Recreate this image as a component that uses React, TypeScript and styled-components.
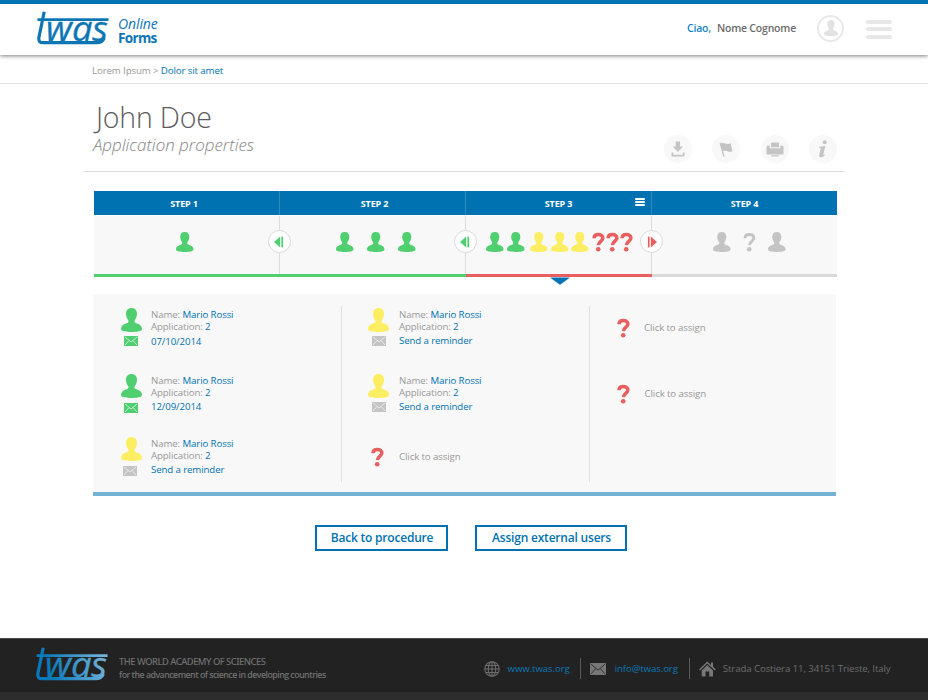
import React from "react";
import styled, { createGlobalStyle } from "styled-components";

const BLUE = "#0072b1";
const GREEN = "#50cf70";
const YELLOW = "#fbee62";
const RED = "#e85f5f";
const GREY = "#c4c4c4";

const GlobalStyle = createGlobalStyle`
  * { box-sizing: border-box; }
  body { margin: 0; background: #fff; font-family: "Open Sans", sans-serif; color: #999; }
  svg { display: block; flex: none; overflow: visible; }
  h1, h2, p { margin: 0; font-weight: 400; }
  button { font-family: inherit; padding: 0; }
`;

const Page = styled.div`
  width: 928px;
  height: 700px;
  display: flex;
  flex-direction: column;
  overflow: hidden;
`;

const Header = styled.header`
  height: 55px;
  flex: none;
  border-top: 4px solid ${BLUE};
  display: flex;
  align-items: flex-start;
  padding: 7px 36px 0 36px;
  box-shadow: 0 1px 4px rgba(0, 0, 0, 0.5);
`;

const Brand = styled.div`
  margin: 6px 0 0 8px;
  color: #0c76b4;
  font-size: 14px;
  line-height: 14px;
  flex: 1;
`;

const BrandTop = styled.div`
  font-style: italic;
  font-weight: 500;
  letter-spacing: -0.1px;
`;

const BrandBottom = styled.div`
  font-size: 13.6px;
  font-weight: 700;
  letter-spacing: -0.7px;
`;

const Greeting = styled.div`
  display: flex;
  gap: 6px;
  margin: 10px 21px 0 0;
  font-size: 10.5px;
  line-height: 14px;
  font-weight: 600;
  letter-spacing: -0.2px;
  color: #6b6b6b;
`;

const Hello = styled.span`
  color: #1583c4;
`;

const Avatar = styled.div`
  width: 27px;
  height: 27px;
  margin: 4px 22px 0 0;
  border: 2px solid #e8e8e8;
  border-radius: 50%;
  display: flex;
  justify-content: center;
  padding-top: 3px;
`;

const MenuLines = styled.div<{ $w: number; $h: number; $gap: number; $color: string }>`
  width: ${(p) => p.$w}px;
  display: flex;
  flex-direction: column;
  gap: ${(p) => p.$gap}px;
  & > i {
    height: ${(p) => p.$h}px;
    border-radius: ${(p) => p.$h / 2}px;
    background: ${(p) => p.$color};
  }
`;

const HeaderMenu = styled.div`
  padding-top: 8.5px;
`;

const Breadcrumb = styled.nav`
  height: 29px;
  flex: none;
  padding: 9px 0 0 92px;
  border-bottom: 1px solid #e1e1e1;
  font-size: 9.7px;
  letter-spacing: -0.12px;
  line-height: 14px;
  white-space: pre;
`;

const Accent = styled.span`
  color: ${BLUE};
  font-weight: 500;
`;

const TitleBar = styled.section`
  height: 88px;
  flex: none;
  margin: 0 84px 0 84px;
  padding: 13px 7px 0 9px;
  border-bottom: 1px solid #dcdcdc;
  display: flex;
  justify-content: space-between;
`;

const Title = styled.h1`
  padding-left: 3px;
  font-size: 28.5px;
  letter-spacing: -0.2px;
  line-height: 40px;
  font-weight: 300;
  color: #5c5c5c;
`;

const Subtitle = styled.h2`
  font-size: 17px;
  line-height: 24px;
  margin-top: -4px;
  letter-spacing: -0.03px;
  font-style: italic;
  font-weight: 300;
  color: #858585;
`;

const Actions = styled.div`
  display: flex;
  gap: 20.3px;
  padding-top: 38px;
`;

const Action = styled.button`
  width: 28px;
  height: 28px;
  border: 0;
  border-radius: 50%;
  background: #f8f8f8;
  display: grid;
  place-items: center;
`;

const Steps = styled.section`
  height: 86px;
  flex: none;
  margin: 19px 91px 0 94px;
  display: grid;
  grid-template-columns: 186px 186px 186px 185px;
`;

const Step = styled.div<{ $line: string }>`
  position: relative;
  display: flex;
  flex-direction: column;
  border-bottom: 3px solid ${(p) => p.$line};
`;

const StepHead = styled.div<{ $divided: boolean; $indent: number }>`
  height: 24px;
  margin-bottom: 1px;
  text-indent: ${(p) => p.$indent}px;
  background: ${BLUE};
  border-right: ${(p) => (p.$divided ? "1px solid #2f8cc0" : "0")};
  color: #fff;
  font-size: 9px;
  letter-spacing: -0.15px;
  line-height: 25px;
  font-weight: 700;
  text-align: center;
`;

const StepBody = styled.div<{ $divided: boolean; $gap: number; $left: number }>`
  flex: 1;
  display: flex;
  gap: ${(p) => p.$gap}px;
  padding: 15.5px 0 0 ${(p) => p.$left}px;
  background: #f8f8f8;
  border-right: ${(p) => (p.$divided ? "1px solid #dcdcdc" : "0")};
`;

const Slot = styled.div<{ $before: number; $w: number }>`
  width: ${(p) => p.$w}px;
  margin-left: ${(p) => p.$before}px;
`;

const StepMenu = styled.div`
  position: absolute;
  right: 7px;
  top: 7px;
`;

const Pointer = styled.div`
  position: absolute;
  top: 86px;
  left: 84px;
`;

const Handle = styled.div`
  position: absolute;
  right: -11px;
  top: 39px;
  width: 23px;
  height: 23px;
  z-index: 1;
  border: 1px solid #dadada;
  border-radius: 50%;
  background: #fff;
  display: grid;
  place-items: center;
`;

const Panel = styled.section`
  height: 202px;
  flex: none;
  margin: 17px 92px 0 93px;
  padding: 12px 0 10px;
  background: #f8f8f8;
  border-bottom: 4px solid #75b3d5;
  display: grid;
  grid-template-columns: 249px 248px 246px;
  font-size: 9.7px;
  letter-spacing: -0.12px;
  line-height: 12px;
`;

const Column = styled.div<{ $left: number; $last?: boolean }>`
  padding: 2px 0 0 ${(p) => p.$left}px;
  display: grid;
  grid-template-rows: 66px 63px 45px;
  border-right: ${(p) => (p.$last ? "0" : "1px solid #dfdfdf")};
`;

const Person = styled.div<{ $gap: number }>`
  display: flex;
  gap: ${(p) => p.$gap}px;
`;

const PersonIcons = styled.div<{ $gap: number; $shift: number }>`
  width: 21px;
  display: flex;
  flex-direction: column;
  gap: ${(p) => p.$gap}px;
  & > svg + svg {
    margin-left: ${(p) => p.$shift}px;
  }
`;

const PersonInfo = styled.div`
  padding-top: 1px;
`;

const PersonAction = styled.p<{ $top: number }>`
  margin-top: ${(p) => p.$top}px;
  color: ${BLUE};
  font-weight: 500;
`;

const Unassigned = styled.div<{ $top: number; $gap: number; $left: number }>`
  display: flex;
  align-items: center;
  gap: ${(p) => p.$gap}px;
  height: 20px;
  margin: ${(p) => p.$top}px 0 0 ${(p) => p.$left}px;
`;

const Buttons = styled.div`
  display: flex;
  flex: 1;
  gap: 27px;
  padding: 29px 0 0 315px;
`;

const Button = styled.button<{ $w: number }>`
  width: ${(p) => p.$w}px;
  height: 26px;
  border: 2px solid ${BLUE};
  background: #fff;
  color: ${BLUE};
  font-size: 12px;
  letter-spacing: -0.2px;
  line-height: 21px;
  font-weight: 600;
  padding: 0 0 1px 1px;
  white-space: nowrap;
`;

const Footer = styled.footer`
  height: 62px;
  flex: none;
  background: #222;
  border-top: 1px solid #4a4a4a;
  border-bottom: 8px solid #2d2d2d;
  display: flex;
  padding: 8px 0 0 35px;
`;

const Academy = styled.div`
  width: 375px;
  padding: 8px 0 0 10px;
  color: #707070;
  white-space: nowrap;
`;

const AcademyName = styled.p`
  font-family: "Noto Sans", "Open Sans", sans-serif;
  font-size: 9.4px;
  line-height: 14px;
  letter-spacing: -0.5px;
  font-weight: 500;
`;

const AcademyMotto = styled.p`
  font-size: 8.8px;
  line-height: 13px;
  font-weight: 600;
  letter-spacing: -0.52px;
`;

const Contact = styled.div<{ $gap: number; $right: number; $divided?: boolean }>`
  height: 21px;
  margin: 11px 9px 0 0;
  padding-right: ${(p) => p.$right}px;
  display: flex;
  align-items: center;
  gap: ${(p) => p.$gap}px;
  border-right: ${(p) => (p.$divided ? "1px solid #5a5a5a" : "0")};
  color: #6c6c6c;
  font-size: 9.7px;
  letter-spacing: -0.12px;
  line-height: 14px;
  white-space: nowrap;
`;

const ContactLink = styled.span`
  color: #0a78b8;
`;

function Logo({ fill }: { fill: string }) {
  return (
    <svg width="74" height="36" viewBox="0 0 74 36" role="img" aria-label="twas">
      <defs>
        <linearGradient id="sky" gradientUnits="userSpaceOnUse" x1="0" y1="30" x2="74" y2="8">
          <stop offset="0.2" stopColor="#0879ba" />
          <stop offset="1" stopColor="#7fb9dc" />
        </linearGradient>
      </defs>
      <g fill="none" stroke={fill} strokeLinejoin="round">
        <path d="M1.5 8.6H72.5" strokeWidth="2.6" />
        <path d="M8.2 0.8L2.9 26.5Q2 31.7 7 31.7H61Q66 31.7 68.4 27" strokeWidth="3.2" />
      </g>
      <text x="10" y="29.6" fill={fill} stroke={fill} strokeWidth="0.3" fontFamily="Open Sans" fontStyle="italic" fontWeight="500" fontSize="34" textLength="62" lengthAdjust="spacingAndGlyphs">
        was
      </text>
    </svg>
  );
}

function UserIcon({ color, w = 21, h = 24 }: { color: string; w?: number; h?: number }) {
  return (
    <svg width={w} height={h} viewBox="0 0 21 24" preserveAspectRatio="none">
      <path
        fill={color}
        d="M10.5 0C14 0 16 2.4 16 5.8C16 9 14.6 11 13.6 12.6C13.2 14.5 14 15 16 15.6C19 16.6 21 18 21 21C21 23.2 16 24 10.5 24S0 23.2 0 21C0 18 2 16.6 5 15.6C7 15 7.8 14.5 7.4 12.6C6.4 11 5 9 5 5.8C5 2.4 7 0 10.5 0Z"
      />
    </svg>
  );
}

function QuestionIcon({ color, thick = 3.5 }: { color: string; thick?: number }) {
  return (
    <svg width="13" height="20" viewBox="0 0 13 20">
      <path d="M2 6.3C2.1 3.6 4 2.5 6.4 2.5S10.9 3.7 10.9 6.1C10.9 9 6.7 9.3 6.4 13.2" fill="none" stroke={color} strokeWidth={thick} />
      <circle cx="6.2" cy="17.2" r="2.3" fill={color} />
    </svg>
  );
}

function MailIcon({ color, line = "#f8f8f8", w = 14, h = 10 }: { color: string; line?: string; w?: number; h?: number }) {
  return (
    <svg width={w} height={h} viewBox="0 0 14 10" preserveAspectRatio="none">
      <rect width="14" height="10" rx="0.6" fill={color} />
      <path d="M1 1L7 6L13 1M1 9L5 4.6M13 9L9 4.6" fill="none" stroke={line} strokeWidth="0.7" />
    </svg>
  );
}

function ArrowIcon({ color, flip }: { color: string; flip?: boolean }) {
  return (
    <svg width="11" height="12" viewBox="0 0 11 12">
      <g transform={flip ? "translate(11 0) scale(-1 1)" : undefined} fill={color}>
        <path d="M0 6L6.2 0.6V11.4Z" />
        <rect x="7.4" y="0.6" width="1.7" height="10.8" />
      </g>
    </svg>
  );
}

const Bars = (p: { w: number; h: number; gap: number; color: string }) => (
  <MenuLines $w={p.w} $h={p.h} $gap={p.gap} $color={p.color}>
    <i />
    <i />
    <i />
  </MenuLines>
);

type Mark = { kind: "user" | "question"; color: string; before?: number };
type StepData = {
  name: string;
  line: string;
  left: number;
  gap: number;
  indent: number;
  marks: Mark[];
  handle?: string;
  active?: boolean;
};

const steps: StepData[] = [
  { name: "STEP 1", line: GREEN, left: 81.5, gap: 0, indent: -5, handle: GREEN, marks: [{ kind: "user", color: GREEN }] },
  {
    name: "STEP 2", line: GREEN, left: 56, gap: 13.5, indent: 4, handle: GREEN,
    marks: [{ kind: "user", color: GREEN }, { kind: "user", color: GREEN }, { kind: "user", color: GREEN }],
  },
  {
    name: "STEP 3", line: RED, left: 20, gap: 3.5, indent: 0, handle: RED, active: true,
    marks: [
      { kind: "user", color: GREEN },
      { kind: "user", color: GREEN },
      { kind: "user", color: YELLOW, before: 1.5 },
      { kind: "user", color: YELLOW },
      { kind: "user", color: YELLOW, before: -0.5 },
      { kind: "question", color: RED, before: -0.5 },
      { kind: "question", color: RED, before: -2 },
      { kind: "question", color: RED, before: -2 },
    ],
  },
  {
    name: "STEP 4", line: "#d9d9d9", left: 60.5, gap: 12.5, indent: 0,
    marks: [{ kind: "user", color: GREY }, { kind: "question", color: GREY }, { kind: "user", color: GREY }],
  },
];

type PersonData = { color: string; mail: string; action: string; iconGap: number; shift: number; top: number; gap?: number };

function PersonCard({ color, mail, action, iconGap, shift, top, gap = 9 }: PersonData) {
  return (
    <Person $gap={gap}>
      <PersonIcons $gap={iconGap} $shift={shift}>
        <UserIcon color={color} />
        <MailIcon color={mail} />
      </PersonIcons>
      <PersonInfo>
        <p>Name: <Accent>Mario Rossi</Accent></p>
        <p>Application: <Accent>2</Accent></p>
        <PersonAction $top={top}>{action}</PersonAction>
      </PersonInfo>
    </Person>
  );
}

function AssignCard({ top, gap, left }: { top: number; gap: number; left: number }) {
  return (
    <Unassigned $top={top} $gap={gap} $left={left}>
      <QuestionIcon color={RED} />
      <span>Click to assign</span>
    </Unassigned>
  );
}

export default function App() {
  return (
    <Page>
      <GlobalStyle />
      <Header>
        <Logo fill="#0c76b4" />
        <Brand>
          <BrandTop>Online</BrandTop>
          <BrandBottom>Forms</BrandBottom>
        </Brand>
        <Greeting>
          <Hello>Ciao,</Hello>
          <span>Nome Cognome</span>
        </Greeting>
        <Avatar>
          <UserIcon color="#e2e2e2" w={14} h={16} />
        </Avatar>
        <HeaderMenu>
          <Bars w={26} h={4} gap={3.5} color="#e8e8e8" />
        </HeaderMenu>
      </Header>

      <Breadcrumb>
        Lorem Ipsum &gt; <Accent>Dolor sit amet</Accent>
      </Breadcrumb>

      <TitleBar>
        <div>
          <Title>John Doe</Title>
          <Subtitle>Application properties</Subtitle>
        </div>
        <Actions>
          <Action aria-label="Download">
            <svg width="14" height="16" viewBox="0 0 14 16" fill={GREY}>
              <path d="M4.7 0.5H9V5.5H12L6.9 11L1.8 5.5H4.7ZM0.5 11.5H2.2V13.8H11.8V11.5H13.5V15.5H0.5Z" />
            </svg>
          </Action>
          <Action aria-label="Flag">
            <svg width="14" height="15" viewBox="0 0 14 15" fill={GREY}>
              <path d="M0.5 1L1.6 0.6L2 1.6C5 -0.2 7.5 3.2 11.5 1.3L13.5 9.3C9.5 11 7.5 7.5 4.2 9.2L5.6 14.5H4.2Z" />
            </svg>
          </Action>
          <Action aria-label="Print">
            <svg width="18" height="15" viewBox="0 0 18 15" fill={GREY}>
              <path d="M5 5.2V1.2Q5 0.5 5.7 0.5H12.3Q13 0.5 13 1.2V5.2Z" />
              <path d="M0.5 5.2Q0.5 3.6 1.9 3.6H3.7V6.2H14.3V3.6H16.1Q17.5 3.6 17.5 5.2V12.6H0.5Z" />
              <path d="M5 13.2H13L12.6 14.6H5.4Z" />
            </svg>
          </Action>
          <Action aria-label="Info">
            <svg width="10" height="18" viewBox="0 0 10 18" fill={GREY}>
              <circle cx="6.7" cy="2.3" r="2" />
              <path d="M1.6 6.7L7.4 6L5.3 14.2Q5.2 15.2 7 14.4L6.7 15.6Q4.8 17.4 2.5 17.2Q0.7 17 1.2 14.7L2.8 8.3L1.3 7.9Z" />
            </svg>
          </Action>
        </Actions>
      </TitleBar>

      <Steps>
        {steps.map((s) => (
          <Step key={s.name} $line={s.line}>
            <StepHead $divided={!!s.handle} $indent={s.indent}>{s.name}</StepHead>
            <StepBody $divided={!!s.handle} $gap={s.gap} $left={s.left}>
              {s.marks.map((m, i) => (
                <Slot key={i} $before={m.before ?? 0} $w={m.kind === "user" ? 17.5 : 12.5}>
                  {m.kind === "user" ? (
                    <UserIcon color={m.color} w={17.5} h={20} />
                  ) : (
                    <QuestionIcon color={m.color} thick={m.color === GREY ? 2.8 : 3.5} />
                  )}
                </Slot>
              ))}
            </StepBody>
            {s.handle && (
              <Handle>
                <ArrowIcon color={s.handle} flip={s.active} />
              </Handle>
            )}
            {s.active && (
              <>
                <StepMenu>
                  <Bars w={10.5} h={2} gap={1} color="#fff" />
                </StepMenu>
                <Pointer>
                  <svg width="20" height="8" viewBox="0 0 20 8">
                    <path d="M0 0.4H20L10 7.8Z" fill={BLUE} />
                  </svg>
                </Pointer>
              </>
            )}
          </Step>
        ))}
      </Steps>

      <Panel>
        <Column $left={28}>
          <PersonCard color={GREEN} mail={GREEN} action="07/10/2014" iconGap={4} shift={3} top={3} />
          <PersonCard color={GREEN} mail={GREEN} action="12/09/2014" iconGap={5} shift={3} top={2} />
          <PersonCard color={YELLOW} mail={GREY} action="Send a reminder" iconGap={4.5} shift={2} top={2} />
        </Column>
        <Column $left={26}>
          <PersonCard color={YELLOW} mail={GREY} action="Send a reminder" iconGap={4} shift={3.5} top={2} gap={10} />
          <PersonCard color={YELLOW} mail={GREY} action="Send a reminder" iconGap={4} shift={3.5} top={2} gap={10} />
          <AssignCard top={10} gap={15} left={3} />
        </Column>
        <Column $left={24} $last>
          <AssignCard top={10} gap={14} left={3} />
          <AssignCard top={10} gap={14.5} left={3} />
        </Column>
      </Panel>

      <Buttons>
        <Button $w={133}>Back to procedure</Button>
        <Button $w={152}>Assign external users</Button>
      </Buttons>

      <Footer>
        <Logo fill="url(#sky)" />
        <Academy>
          <AcademyName>THE WORLD ACADEMY OF SCIENCES</AcademyName>
          <AcademyMotto>for the advancement of science in developing countries</AcademyMotto>
        </Academy>
        <Contact $gap={7.5} $right={10.5} $divided>
          <svg width="16" height="16" viewBox="0 0 16 16" fill="none" stroke="#6c6c6c" strokeWidth="1.1">
            <circle cx="8" cy="8" r="7.2" />
            <ellipse cx="8" cy="8" rx="3.8" ry="7.2" />
            <path d="M8 1V15M1 8H15M2 4.5H14M2 11.5H14" />
          </svg>
          <ContactLink>www.twas.org</ContactLink>
        </Contact>
        <Contact $gap={8.5} $right={11} $divided>
          <MailIcon color="#777" line="#222" w={16} h={12} />
          <ContactLink>info@twas.org</ContactLink>
        </Contact>
        <Contact $gap={7} $right={0}>
          <svg width="17" height="16" viewBox="0 0 17 16" fill="#777">
            <path d="M8.3 0.5L12 4V1.6H14V5.8L16.8 8.5L15.8 9.6L8.3 2.6L1 9.6L0 8.5Z" />
            <path d="M8.3 4L14 9.4V15.5H10.2V10.5H6.5V15.5H2.7V9.4Z" />
          </svg>
          <span>Strada Costiera 11, 34151 Trieste, Italy</span>
        </Contact>
      </Footer>
    </Page>
  );
}
